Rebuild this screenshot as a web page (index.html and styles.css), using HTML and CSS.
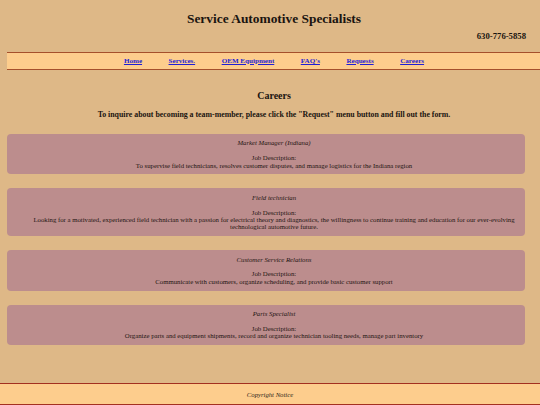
FILE: index.html
```html
<!DOCTYPE html>
<html lang="en">
<head>
<meta charset="utf-8">
<title>Careers - Service Automotive Specialists</title>
<link rel="stylesheet" href="styles.css">
</head>
<body>
<div class="page">
  <div class="wrap">
    <header class="site-header">
      <h1 class="site-title">Service Automotive Specialists</h1>
      <div class="phone">630-776-5858</div>
    </header>
    <nav class="menu">
      <a href="#">Home</a>
      <a href="#">Services.</a>
      <a href="#">OEM Equipment</a>
      <a href="#">FAQ's</a>
      <a href="#">Requests</a>
      <a href="#">Careers</a>
    </nav>
    <main class="content">
      <h2 class="page-title">Careers</h2>
      <p class="intro">To inquire about becoming a team-member, please click the "Request" menu button and fill out the form.</p>
      <section class="job">
        <div class="job-title">Market Manager (Indiana)</div>
        <div class="job-label">Job Description:</div>
        <div class="job-desc">To supervise field technicians, resolves customer disputes, and manage logistics for the Indiana region</div>
      </section>
      <section class="job">
        <div class="job-title">Field technician</div>
        <div class="job-label">Job Description:</div>
        <div class="job-desc">Looking for a motivated, experienced field technician with a passion for electrical theory and diagnostics, the willingness to continue training and education for our ever-evolving technological automotive future.</div>
      </section>
      <section class="job">
        <div class="job-title">Customer Service Relations</div>
        <div class="job-label">Job Description:</div>
        <div class="job-desc">Communicate with customers, organize scheduling, and provide basic customer support</div>
      </section>
      <section class="job">
        <div class="job-title">Parts Specialist</div>
        <div class="job-label">Job Description:</div>
        <div class="job-desc">Organize parts and equipment shipments, record and organize technician tooling needs, manage part inventory</div>
      </section>
    </main>
  </div>
  <footer class="site-footer">Copyright Notice</footer>
</div>
</body>
</html>
```

FILE: styles.css
```css
html, body {
  margin: 0;
  padding: 0;
}
body {
  background: #deb887;
  font-family: "Liberation Serif", "Times New Roman", serif;
  color: #1a1410;
  overflow-x: hidden;
}
.page {
  min-height: 100vh;
  display: flex;
  flex-direction: column;
}
.wrap {
  flex: 1;
  margin-left: 7px;
  width: 534px;
}
.site-header {
  padding-top: 11px;
}
.site-title {
  margin: 0;
  font-size: 13.4px;
  line-height: 15px;
  font-weight: bold;
  text-align: center;
}
.phone {
  margin-top: 5px;
  padding-right: 15px;
  font-size: 8.7px;
  line-height: 10px;
  font-weight: bold;
  text-align: right;
}
.menu {
  margin-top: 11px;
  background: #fdcd8d;
  border-top: 1px solid #a5502c;
  border-bottom: 1px solid #a5502c;
  height: 16px;
  display: flex;
  justify-content: center;
  align-items: center;
  gap: 26.5px;
}
.menu a {
  font-size: 7.1px;
  line-height: 16px;
  font-weight: bold;
  color: #1f1fd6;
  text-decoration: underline;
}
.content {
  padding-right: 16.5px;
}
.page-title {
  margin: 20px 0 0;
  padding-left: 16.5px;
  font-size: 10px;
  line-height: 12px;
  font-weight: bold;
  text-align: center;
}
.intro {
  margin: 8px 0 0;
  padding-left: 16.5px;
  font-size: 7.85px;
  line-height: 10px;
  font-weight: bold;
  text-align: center;
}
.job {
  margin-top: 14px;
  background: #bc8d8d;
  border-radius: 4px;
  padding: 5.4px 3.5px 5.4px 20px;
  font-size: 6.75px;
  line-height: 7.4px;
  text-align: center;
  color: #1f1512;
}
.job-title {
  font-style: italic;
  margin-bottom: 7.4px;
}
.site-footer {
  background: #fdcd8d;
  border-top: 1px solid #a3301f;
  border-bottom: 1px solid #a3301f;
  height: 20px;
  display: flex;
  align-items: center;
  justify-content: center;
  font-size: 6.7px;
  font-style: italic;
  color: #2e2418;
}
```
